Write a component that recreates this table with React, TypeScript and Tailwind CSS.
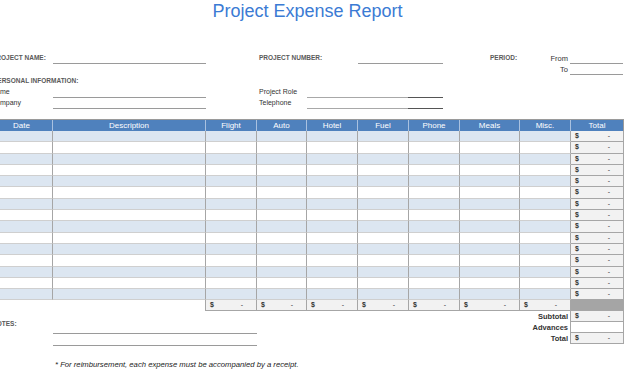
const GRID = "grid grid-cols-[62px_153px_51px_50px_51px_51px_51px_60px_51px_53px]";
const HEADERS = ["Date", "Description", "Flight", "Auto", "Hotel", "Fuel", "Phone", "Meals", "Misc.", "Total"];
const ROWS = Array.from({ length: 15 }, (_, i) => i);

function Money({ className = "" }: { className?: string }) {
  return (
    <div className={`flex justify-between pl-[4px] pr-[13px] text-[7px] leading-[10px] text-[#333] ${className}`}>
      <span className="font-bold">$</span>
      <span>-</span>
    </div>
  );
}

export default function App() {
  return (
    <div className="relative w-[630px] h-[380px] overflow-hidden bg-white font-['Liberation_Sans',Arial,sans-serif]">
      <div className="ml-[-9px] w-[633px]">
        {/* title */}
        <div className="pt-[2px] h-[20px] text-center text-[18px] leading-[18px] text-[#3b7bd4]">
          Project Expense Report
        </div>

        {/* project row */}
        <div className="mt-[30px] flex h-[14px] items-end">
          <div className="w-[62px] mb-[2px] pl-[1px] whitespace-nowrap text-[6.5px] font-bold leading-[8px] text-[#5a5a5a]">PROJECT NAME:</div>
          <div className="w-[153px] h-full border-b border-[#9a9a9a]" />
          <div className="w-[53px]" />
          <div className="w-[99px] mb-[2px] whitespace-nowrap text-[6.5px] font-bold leading-[8px] text-[#5a5a5a]">PROJECT NUMBER:</div>
          <div className="w-[85px] h-full border-b border-[#9a9a9a]" />
          <div className="w-[47px]" />
          <div className="w-[40px] mb-[2px] whitespace-nowrap text-[6.5px] font-bold leading-[8px] text-[#5a5a5a]">PERIOD:</div>
          <div className="w-[40px] mb-[1px] pr-[2px] text-right text-[7.5px] leading-[9px] text-[#333]">From</div>
          <div className="w-[53px] h-full border-b border-[#9a9a9a]" />
        </div>
        <div className="flex h-[11px] items-end">
          <div className="w-[539px]" />
          <div className="w-[40px] mb-[1px] pr-[2px] text-right text-[7.5px] leading-[9px] text-[#333]">To</div>
          <div className="w-[53px] h-full border-b border-[#9a9a9a]" />
        </div>

        {/* personal information */}
        <div className="flex h-[10px] items-end">
          <div className="pl-[2px] whitespace-nowrap text-[6.5px] font-bold leading-[8px] text-[#5a5a5a]">PERSONAL INFORMATION:</div>
        </div>
        <div className="flex h-[13px] items-end">
          <div className="w-[62px] mb-[2px] text-[7px] leading-[8px] text-[#333]">Name</div>
          <div className="w-[153px] h-full border-b border-[#9a9a9a]" />
          <div className="w-[53px]" />
          <div className="w-[48px] mb-[2px] whitespace-nowrap text-[7px] leading-[8px] text-[#333]">Project Role</div>
          <div className="w-[101px] h-full border-b border-[#a8a8a8]" />
          <div className="w-[35px] h-full border-b border-[#555]" />
        </div>
        <div className="flex h-[11px] items-end">
          <div className="w-[62px] mb-[2px] text-[7px] leading-[8px] text-[#333]">Company</div>
          <div className="w-[153px] h-full border-b border-[#9a9a9a]" />
          <div className="w-[53px]" />
          <div className="w-[48px] mb-[2px] whitespace-nowrap text-[7px] leading-[8px] text-[#333]">Telephone</div>
          <div className="w-[101px] h-full border-b border-[#a8a8a8]" />
          <div className="w-[35px] h-full border-b border-[#555]" />
        </div>
        <div className="h-[10px]" />

        {/* table header */}
        <div className={`${GRID} border-t border-[#9a9a9a] bg-[#4f81bd]`}>
          {HEADERS.map((h, i) => (
            <div
              key={h}
              className={`h-[11px] text-center text-[8px] leading-[11px] text-white ${i < 9 ? "border-r border-[#a9c1e0]" : "border-r border-[#9a9a9a]"}`}
            >
              {h}
            </div>
          ))}
        </div>

        {/* data rows */}
        {ROWS.map((r) => (
          <div key={r} className={`${GRID} ${r % 2 === 0 ? "bg-[#dce6f1]" : "bg-white"}`}>
            {HEADERS.map((h, i) =>
              i === 9 ? (
                <div key={h} className="h-[11.3px] border-r border-b border-[#a6a6a6] bg-[#f2f2f2]">
                  <Money className="leading-[10.3px]" />
                </div>
              ) : (
                <div key={h} className="h-[11.3px] border-r border-r-[#a6a6a6] border-b border-b-[#cfcfcf]" />
              )
            )}
          </div>
        ))}

        {/* column totals */}
        <div className={GRID}>
          <div className="h-[11px]" />
          <div className="h-[11px] border-r border-[#a6a6a6]" />
          {HEADERS.slice(2, 9).map((h) => (
            <div key={h} className="h-[11px] border-r border-b border-[#a6a6a6] bg-[#f2f2f2]">
              <Money />
            </div>
          ))}
          <div className="h-[11px] border-r border-b border-[#a6a6a6] bg-[#a5a5a5]" />
        </div>

        {/* notes + summary */}
        <div className="flex">
          <div className="w-[266px]">
            <div className="flex h-[23px] items-end">
              <div className="w-[62px] mb-[6px] pl-[1px] whitespace-nowrap text-[6.5px] font-bold leading-[8px] text-[#5a5a5a]">NOTES:</div>
              <div className="w-[204px] h-full border-b border-[#9a9a9a]" />
            </div>
            <div className="flex h-[12px] items-end">
              <div className="w-[62px]" />
              <div className="w-[204px] h-full border-b border-[#9a9a9a]" />
            </div>
          </div>
          <div className="ml-auto w-[160px]">
            {["Subtotal", "Advances", "Total"].map((label) => (
              <div key={label} className="flex h-[11px]">
                <div className="flex-1 pr-[2px] text-right text-[7.5px] font-bold leading-[11px] text-[#333]">{label}</div>
                <div className={`w-[54px] border-x border-b border-[#a6a6a6] ${label === "Advances" ? "bg-white" : "bg-[#f2f2f2]"}`}>
                  {label !== "Advances" && <Money />}
                </div>
              </div>
            ))}
          </div>
        </div>

        {/* footnote */}
        <div className="mt-[14px] pl-[64px] text-[7.7px] italic leading-[9px] text-[#1a1a1a]">
          * For reimbursement, each expense must be accompanied by a receipt.
        </div>
      </div>
    </div>
  );
}
